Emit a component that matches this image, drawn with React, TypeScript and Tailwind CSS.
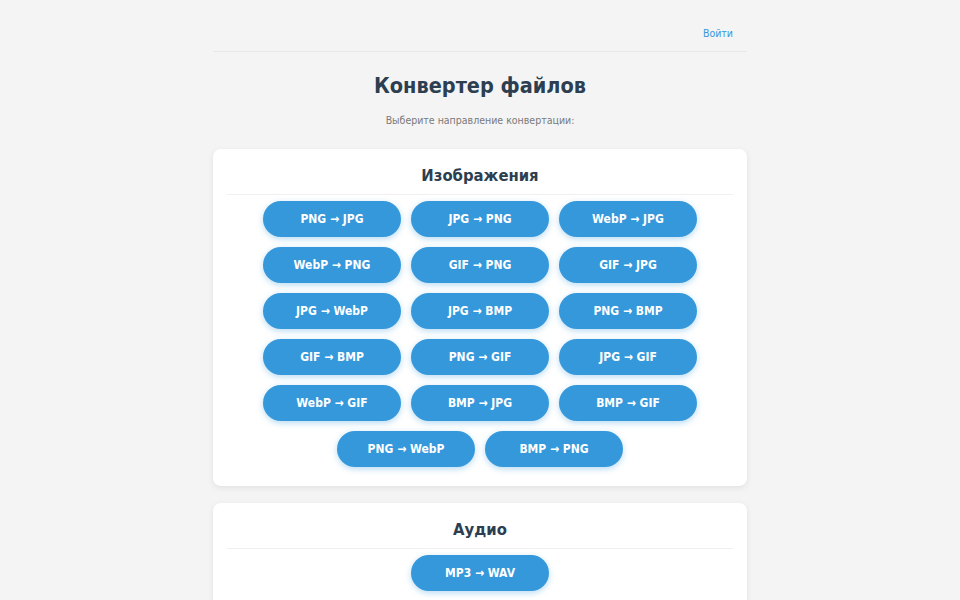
import React from 'react';

const imageConversions = [
    'PNG → JPG', 'JPG → PNG', 'WebP → JPG',
    'WebP → PNG', 'GIF → PNG', 'GIF → JPG',
    'JPG → WebP', 'JPG → BMP', 'PNG → BMP',
    'GIF → BMP', 'PNG → GIF', 'JPG → GIF',
    'WebP → GIF', 'BMP → JPG', 'BMP → GIF',
    'PNG → WebP', 'BMP → PNG',
];

const audioConversions = ['MP3 → WAV'];

const Section: React.FC<{ title: string; items: string[] }> = ({ title, items }) => (
    <section className="bg-white rounded-lg shadow-[0_2px_6px_rgba(0,0,0,0.08)] px-[14px] pt-[15px] pb-[14px]">
        <h2 className="text-[16.5px] leading-[24px] font-bold text-[#2c3e50] text-center pb-[6px] border-b border-[#f0f0f0]">
            {title}
        </h2>
        <div className="flex flex-wrap justify-center pt-[1px]">
            {items.map(item => (
                <button
                    key={item}
                    className="w-[138px] h-[36px] m-[5px] rounded-full bg-[#3498db] text-white text-[12px] font-bold shadow-[0_2px_6px_rgba(52,152,219,0.35)]"
                >
                    {item}
                </button>
            ))}
        </div>
    </section>
);

export default function App() {
    return (
        <div className="min-h-screen bg-[#f4f4f4] text-[#2c3e50] [font-family:'DejaVu_Sans_Condensed','DejaVu_Sans',sans-serif]">
            <div className="w-[534px] mx-auto">
                <header className="flex justify-end items-center h-[52px] pt-[16px] pr-[14px] border-b border-[#e9e9e9]">
                    <a href="#" className="text-[10.5px] text-[#3498db]">Войти</a>
                </header>
                <h1 className="mt-[19px] text-[21.5px] leading-[30px] font-bold text-center text-[#2c3e50]">Конвертер файлов</h1>
                <p className="mt-[11px] text-[10.5px] leading-[16px] text-center text-[#7a7a7a]">Выберите направление конвертации:</p>
                <div className="mt-[21px] flex flex-col gap-[17px]">
                    <Section title="Изображения" items={imageConversions} />
                    <Section title="Аудио" items={audioConversions} />
                </div>
            </div>
        </div>
    );
}
